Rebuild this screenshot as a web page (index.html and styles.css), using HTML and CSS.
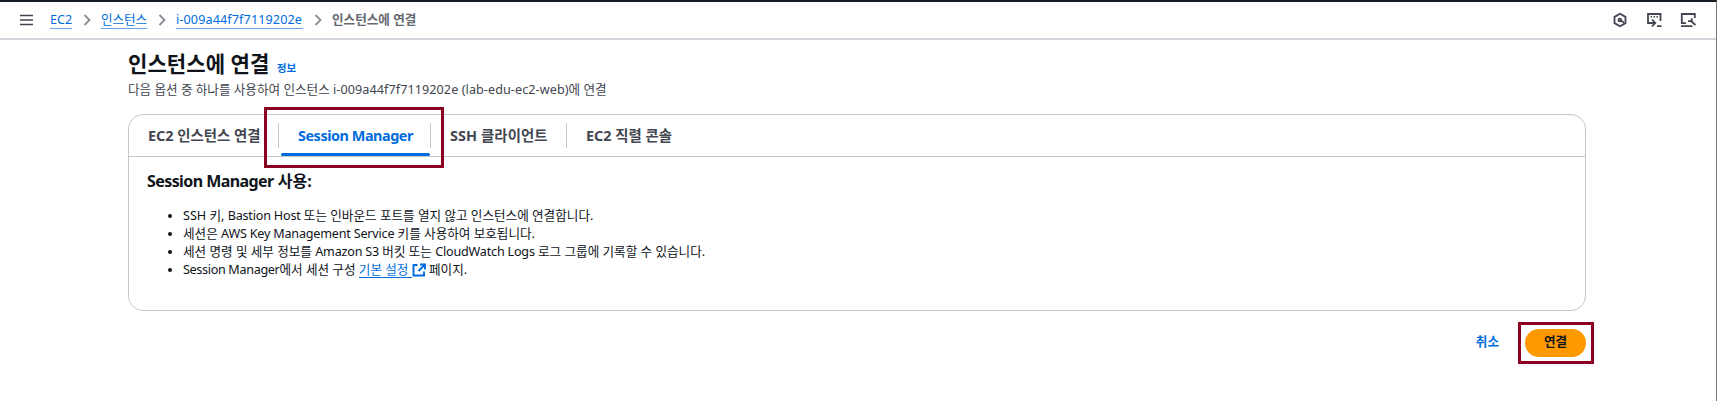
FILE: index.html
```html
<!DOCTYPE html>
<html lang="ko">
<head>
<meta charset="utf-8">
<title>인스턴스에 연결</title>
<link rel="stylesheet" href="styles.css">
</head>
<body>
<div class="page">
  <header class="topbar">
    <svg class="menu" width="13" height="12" viewBox="0 0 13 12"><path d="M0 1.500h13M0 6h13M0 10.500h13"/></svg>
    <nav class="crumbs">
      <a class="crumb c1">EC2</a>
      <svg class="chev" width="8" height="12" viewBox="0 0 8 12"><path d="M1.500 1l5 5-5 5"/></svg>
      <a class="crumb c2">인스턴스</a>
      <svg class="chev" width="8" height="12" viewBox="0 0 8 12"><path d="M1.500 1l5 5-5 5"/></svg>
      <a class="crumb c3">i-009a44f7f7119202e</a>
      <svg class="chev" width="8" height="12" viewBox="0 0 8 12"><path d="M1.500 1l5 5-5 5"/></svg>
      <span class="crumb current">인스턴스에 연결</span>
    </nav>
    <div class="tools">
      <svg width="16" height="16" viewBox="0 0 16 16"><path d="M8 1.800l5.500 3.100v6.200L8 14.200l-5.500-3.100V4.900z"/><circle cx="7.800" cy="8" r="1.300"/><path d="M8.500 8.300l3.500 2.200"/></svg>
      <svg width="16" height="16" viewBox="0 0 16 16"><path d="M2 7V2h12.500v7M2 6.500V11h6M6 7.500L9.300 11 6 14.300M11 14.200h4.500"/><path class="dots" d="M4.500 4.700h7.500"/></svg>
      <svg width="16" height="16" viewBox="0 0 16 16"><path d="M6 11.200H1.800V2h13v4M1 14.200h11.500M11 9l4.500 4"/><path d="M11.700 6.200v3H8"/></svg>
    </div>
  </header>
  <main class="content">
    <div class="title-row"><h1>인스턴스에 연결</h1><a class="info">정보</a></div>
    <p class="desc">다음 옵션 중 하나를 사용하여 인스턴스 <span class="lat">i-009a44f7f7119202e (lab-edu-ec2-web)</span>에 연결</p>
    <section class="card">
      <div class="tabs">
        <div class="tab t1"><span>EC2 인스턴스 연결</span></div>
        <div class="tab t2 active"><span>Session Manager</span></div>
        <div class="tab t3"><span>SSH 클라이언트</span></div>
        <div class="tab t4"><span>EC2 직렬 콘솔</span></div>
        <div class="mark mark-tab"></div>
      </div>
      <h2><span class="name">Session Manager</span> 사용:</h2>
      <ul>
        <li>SSH 키, <span class="term">Bastion Host</span> 또는 인바운드 포트를 열지 않고 인스턴스에 연결합니다.</li>
        <li>세션은 <span class="term">AWS Key Management Service</span> 키를 사용하여 보호됩니다.</li>
        <li>세션 명령 및 세부 정보를 <span class="term">Amazon S3</span> 버킷 또는 <span class="term">CloudWatch Logs</span> 로그 그룹에 기록할 수 있습니다.</li>
        <li><span class="product">Session Manager</span>에서 세션 구성 <a class="link">기본 설정 </a><svg class="ext" width="14" height="14" viewBox="0 0 14 14"><path d="M5.500 2H1.500v10.500H12V8.500M8 1.500h5v5M13 1.500L6.500 8"/></svg> 페이지.</li>
      </ul>
    </section>
    <div class="actions">
      <a class="cancel">취소</a>
      <div class="primary-wrap"><button class="primary">연결</button><div class="mark mark-btn"></div></div>
    </div>
  </main>
</div>
</body>
</html>
```
FILE: styles.css
```css
* { box-sizing: border-box; }
body { margin: 0; background: #fff; color: #0f141a; font: 12.6px/18px "Noto Sans", "Noto Sans CJK KR", sans-serif; }
h1, h2, p, ul { margin: 0; }
svg { fill: none; flex: none; }
.page { height: 401px; border-top: 2px solid #161d26; border-right: 1px solid #777; overflow: hidden; }
.topbar { height: 38px; border-bottom: 2px solid #d4d4dc; display: flex; align-items: center; padding: 0 20px 0 20px; }
.menu { stroke: #424650; stroke-width: 1.6; }
.crumbs { display: flex; align-items: center; margin-left: 17px; }
.crumb { white-space: nowrap; line-height: 16px; height: 17px; }
a { color: #006ce0; }
a.crumb { border-bottom: 1px solid #6aa6ee; }
.chev { stroke: #8c8c94; stroke-width: 1.8; margin: 0 10.5px; }
.c1 { width: 22px; }
.c2 { width: 46px; letter-spacing: -0.1px; }
.c3 { width: 127px; letter-spacing: 0.12px; }
.current { color: #656871; font-weight: 700; }
.tools { margin-left: auto; display: flex; gap: 18px; }
.tools svg { stroke: #424650; stroke-width: 1.8; }
.tools .dots { stroke-width: 1.5; stroke-dasharray: 1.5 1.5; }
.content { padding: 10px 0 0 128px; width: 1586px; }
.title-row { display: flex; align-items: baseline; height: 28px; }
h1 { font-size: 21.1px; line-height: 28px; font-weight: 700; }
.info { font-size: 10.6px; font-weight: 700; margin-left: 7.5px; }
.desc { color: #424650; height: 18px; margin-top: 3px; white-space: nowrap; }
.lat { letter-spacing: 0.08px; }
.card { margin-top: 15px; height: 197px; border: 1px solid #c6c6cd; border-radius: 15px; }
.tabs { height: 42px; border-bottom: 1px solid #c6c6cd; display: flex; position: relative; font-size: 14.4px; font-weight: 700; color: #424650; }
.tab { height: 42px; padding-top: 12px; white-space: nowrap; position: relative; }
.tab + .tab::before { content: ""; position: absolute; left: 0; top: 8px; width: 1px; height: 25px; background: #c6c6cd; }
.t1 { width: 149px; padding-left: 19px; }
.t2 { width: 152px; padding-left: 20px; letter-spacing: -0.45px; }
.t3 { width: 136px; padding-left: 20px; letter-spacing: 0.1px; }
.t4 { padding-left: 20px; }
.active { color: #006ce0; }
.active::after { content: ""; position: absolute; left: 3px; right: 0; bottom: 1px; height: 3px; border-radius: 2px; background: #006ce0; }
.mark { position: absolute; border: 3px solid #8b0020; }
.mark-tab { left: 135px; top: -8px; width: 180px; height: 61px; }
h2 { margin: 13px 0 0 18px; font-size: 16px; line-height: 22px; font-weight: 700; }
.name { letter-spacing: -0.58px; }
ul { margin-top: 15px; padding-left: 54px; }
li { height: 18px; white-space: nowrap; }
.term { letter-spacing: -0.2px; }
.product { letter-spacing: -0.33px; }
.link { display: inline-block; height: 17px; line-height: 18px; border-bottom: 1px solid #006ce0; white-space: pre; }
.ext { stroke: #006ce0; stroke-width: 1.9; vertical-align: -3px; }
.actions { display: flex; justify-content: flex-end; align-items: center; margin-top: 18px; height: 28px; font-weight: 700; }
.cancel { margin-right: 26px; padding-bottom: 2px; }
.primary-wrap { position: relative; width: 61px; height: 28px; }
.primary { width: 61px; height: 28px; padding: 0 0 2px; border: 0; border-radius: 14px; background: #ff9900; color: #0f141a; font: inherit; display: block; }
.mark-btn { left: -7px; top: -7px; width: 76px; height: 42px; }
```
